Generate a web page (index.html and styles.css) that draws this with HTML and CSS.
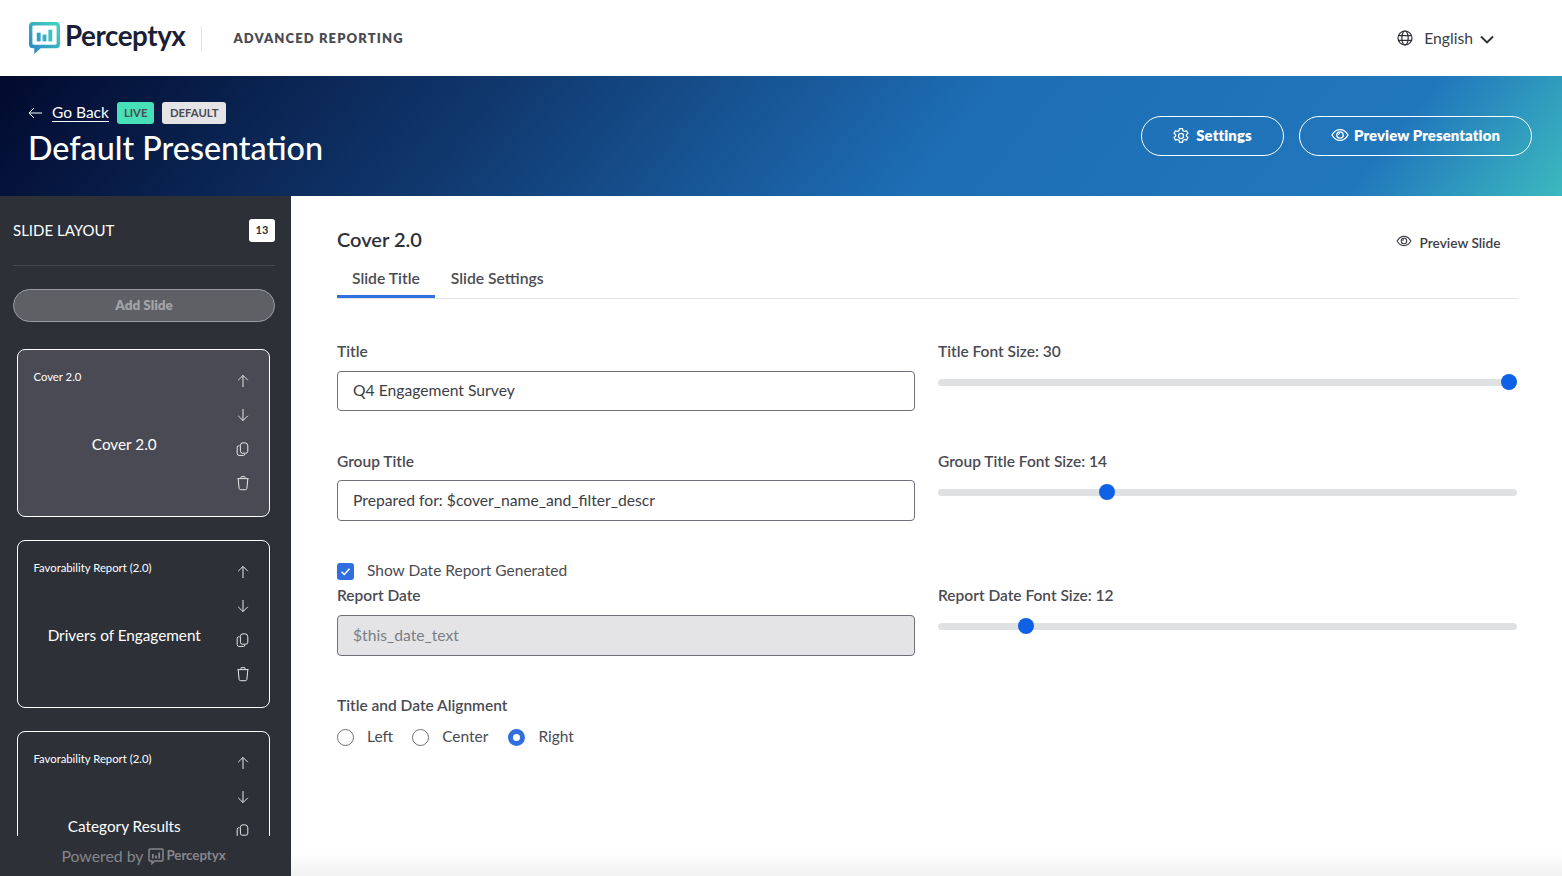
FILE: index.html
```html
<!DOCTYPE html>
<html lang="en">
<head>
<meta charset="utf-8">
<title>Default Presentation</title>
<link rel="stylesheet" href="styles.css">
</head>
<body>
<svg class="defs" width="0" height="0" aria-hidden="true">
  <defs>
    <linearGradient id="logoGrad" x1="0" y1="1" x2="1" y2="0">
      <stop offset="0" stop-color="#2a7fc8"/><stop offset="1" stop-color="#45d8bc"/>
    </linearGradient>
    <symbol id="i-up" viewBox="0 0 16 16"><path d="M8 14V2.5M3.2 7.2 8 2.4l4.8 4.8" fill="none" stroke="currentColor" stroke-width="1"/></symbol>
    <symbol id="i-down" viewBox="0 0 16 16"><path d="M8 2v11.5M3.2 8.8 8 13.6l4.8-4.8" fill="none" stroke="currentColor" stroke-width="1"/></symbol>
    <symbol id="i-copy" viewBox="0 0 16 16"><path d="M4.600 4.800H3.600a1.400 1.400 0 0 0-1.400 1.400v6.400a1.800 1.800 0 0 0 1.800 1.800h4.400a1.600 1.600 0 0 0 1.600-1.400M8 1.800h1.800a3 3 0 0 1 3 3v5.400a2 2 0 0 1-2 2H7.400a2 2 0 0 1-2-2V4.400A2.600 2.600 0 0 1 8 1.800Z" fill="none" stroke="currentColor" stroke-width="1"/></symbol>
    <symbol id="i-trash" viewBox="0 0 16 16"><path d="M2.400 3.600h11.200M5.800 3.400V2.800A1.200 1.200 0 0 1 7 1.600h2a1.200 1.200 0 0 1 1.200 1.200v.6M3.200 3.800l.9 9.600a1.600 1.600 0 0 0 1.600 1.300h4.600a1.600 1.600 0 0 0 1.600-1.300l.9-9.600" fill="none" stroke="currentColor" stroke-width="1"/></symbol>
    <symbol id="i-eye" viewBox="0 0 18 14"><path d="M1 7c2-3.600 4.800-5.400 8-5.400S15 3.400 17 7c-2 3.600-4.800 5.400-8 5.400S3 10.600 1 7Z" fill="none" stroke="currentColor" stroke-width="1.300"/><circle cx="9" cy="7" r="3.200" fill="none" stroke="currentColor" stroke-width="1.300"/><path d="M9 5.400A1.600 1.600 0 0 0 7.400 7" fill="none" stroke="currentColor" stroke-width="1"/></symbol>
  </defs>
</svg>

<header class="topbar">
  <div class="brand">
    <svg class="logo" viewBox="0 0 32 33" aria-hidden="true">
      <path d="M4 0h24a4 4 0 0 1 4 4v19a4 4 0 0 1-4 4H12l-6.500 6v-6H4a4 4 0 0 1-4-4V4a4 4 0 0 1 4-4Z" fill="url(#logoGrad)"/>
      <rect x="3.500" y="3.500" width="25" height="20" rx="1.500" fill="#fff"/>
      <rect x="8" y="11" width="4" height="9" fill="#2f9fcb"/>
      <rect x="14" y="13" width="4" height="7" fill="#35b0c9"/>
      <rect x="20" y="8" width="4" height="12" fill="#3cc2c4"/>
    </svg>
    <span class="wordmark">Perceptyx</span>
  </div>
  <span class="brand-sep"></span>
  <span class="product">ADVANCED REPORTING</span>
  <div class="lang">
    <svg class="globe" viewBox="0 0 16 16" aria-hidden="true"><g fill="none" stroke="#2e3038" stroke-width="1.200"><circle cx="8" cy="8" r="7"/><ellipse cx="8" cy="8" rx="3.200" ry="7"/><path d="M1.400 5.600h13.200M1.400 10.400h13.200"/></g></svg>
    <span class="lang-text">English</span>
    <svg class="chev" viewBox="0 0 14 9" aria-hidden="true"><path d="M1 1.500 7 7.500l6-6" fill="none" stroke="#2e3038" stroke-width="1.900"/></svg>
  </div>
</header>

<section class="banner">
  <div class="banner-left">
    <div class="crumbs">
      <svg class="back" viewBox="0 0 14 12" aria-hidden="true"><path d="M14 6H1M6 1 1 6l5 5" fill="none" stroke="#fff" stroke-width="1"/></svg>
      <a class="goback" href="#">Go Back</a>
      <span class="tag tag-live">LIVE</span>
      <span class="tag tag-default">DEFAULT</span>
    </div>
    <h1 class="pagetitle">Default Presentation</h1>
  </div>
  <div class="banner-actions">
    <button class="btn btn-settings">
      <svg class="btn-ico" viewBox="1 1 14 14" aria-hidden="true"><g fill="none" stroke="#fff" stroke-width="1.100"><path d="M6.700 1.500h2.600l.4 1.800 1.300.7 1.800-.6 1.300 2.300-1.400 1.200v1.200l1.400 1.200-1.300 2.300-1.800-.6-1.300.7-.4 1.800H6.700l-.4-1.800-1.300-.7-1.800.6-1.300-2.300 1.400-1.200V6.900L1.900 5.700l1.300-2.300 1.800.6 1.300-.7Z" stroke-linejoin="round"/><circle cx="8" cy="8" r="2.200"/></g></svg>
      Settings
    </button>
    <button class="btn btn-preview">
      <svg class="btn-eye"><use href="#i-eye"/></svg>
      Preview Presentation
    </button>
  </div>
</section>

<div class="workspace">
  <aside class="sidebar">
    <div class="side-head">
      <span class="side-title">SLIDE LAYOUT</span>
      <span class="count">13</span>
    </div>
    <button class="add-slide">Add Slide</button>
    <div class="slides">
      <article class="slide slide-active">
        <div class="slide-body">
          <div class="slide-type">Cover 2.0</div>
          <div class="slide-name">Cover 2.0</div>
        </div>
        <div class="slide-tools">
          <svg><use href="#i-up"/></svg><svg><use href="#i-down"/></svg><svg><use href="#i-copy"/></svg><svg><use href="#i-trash"/></svg>
        </div>
      </article>
      <article class="slide">
        <div class="slide-body">
          <div class="slide-type">Favorability Report (2.0)</div>
          <div class="slide-name">Drivers of Engagement</div>
        </div>
        <div class="slide-tools">
          <svg><use href="#i-up"/></svg><svg><use href="#i-down"/></svg><svg><use href="#i-copy"/></svg><svg><use href="#i-trash"/></svg>
        </div>
      </article>
      <article class="slide">
        <div class="slide-body">
          <div class="slide-type">Favorability Report (2.0)</div>
          <div class="slide-name">Category Results</div>
        </div>
        <div class="slide-tools">
          <svg><use href="#i-up"/></svg><svg><use href="#i-down"/></svg><svg><use href="#i-copy"/></svg><svg><use href="#i-trash"/></svg>
        </div>
      </article>
    </div>
    <footer class="powered">
      <span>Powered by</span>
      <svg class="mini-logo" viewBox="0 0 16 17" aria-hidden="true"><path d="M2 1h12a1 1 0 0 1 1 1v10a1 1 0 0 1-1 1H6.500L4 15.500V13H2a1 1 0 0 1-1-1V2a1 1 0 0 1 1-1Z" fill="none" stroke="#85868b" stroke-width="1.500"/><path d="M4.800 6v4.500M8 7.500v3M11.200 4.500v6" stroke="#85868b" stroke-width="1.800"/></svg>
      <span class="mini-word">Perceptyx</span>
    </footer>
  </aside>

  <main class="editor">
    <div class="editor-head">
      <h2 class="slide-heading">Cover 2.0</h2>
      <a class="preview-slide" href="#"><svg class="ps-eye"><use href="#i-eye"/></svg>Preview Slide</a>
    </div>
    <nav class="tabs">
      <span class="tab tab-on">Slide Title</span>
      <span class="tab">Slide Settings</span>
    </nav>
    <form class="form">
      <div class="field">
        <label class="label">Title</label>
        <input class="input" value="Q4 Engagement Survey">
      </div>
      <div class="field">
        <label class="label">Title Font Size: 30</label>
        <div class="slider"><span class="thumb thumb-30"></span></div>
      </div>
      <div class="field field-second">
        <label class="label label-tight">Group Title</label>
        <input class="input input-tall" value="Prepared for: $cover_name_and_filter_descr">
      </div>
      <div class="field field-second">
        <label class="label">Group Title Font Size: 14</label>
        <div class="slider"><span class="thumb thumb-14"></span></div>
      </div>
      <div class="field">
        <div class="check-row">
          <span class="checkbox"><svg viewBox="0 0 17 17" aria-hidden="true"><path d="M4.500 8.800 7.300 11.500 12.500 5.800" fill="none" stroke="#fff" stroke-width="1.500"/></svg></span>
          <span class="opt">Show Date Report Generated</span>
        </div>
        <label class="label">Report Date</label>
        <input class="input input-tall input-off" value="$this_date_text" disabled>
      </div>
      <div class="field field-end">
        <label class="label">Report Date Font Size: 12</label>
        <div class="slider"><span class="thumb thumb-12"></span></div>
      </div>
      <div class="field">
        <label class="label">Title and Date Alignment</label>
        <div class="radios">
          <span class="radio"></span><span class="opt radio-text">Left</span>
          <span class="radio"></span><span class="opt radio-text radio-text-wide">Center</span>
          <span class="radio radio-on"></span><span class="opt">Right</span>
        </div>
      </div>
    </form>
    <div class="fade"></div>
  </main>
</div>
</body>
</html>
```
FILE: styles.css
```css
* { box-sizing: border-box; }
html, body { margin: 0; height: 100%; }
body {
  width: 1562px;
  height: 876px;
  overflow: hidden;
  background: #fff;
  color: #2e3038;
  font-family: "Lato", "Liberation Sans", sans-serif;
  display: flex;
  flex-direction: column;
}
.defs { position: absolute; }

.topbar {
  height: 76px;
  flex: none;
  display: flex;
  align-items: center;
  padding: 0 68px 0 29px;
}
.brand { display: flex; align-items: center; gap: 5px; }
.logo { width: 31px; height: 32px; display: block; margin-top: -1px; }
.wordmark { font-size: 27.800px; font-weight: 700; color: #1b1f36; letter-spacing: -0.45px; line-height: 32px; margin-top: -5px; }
.brand-sep { width: 1px; height: 25px; background: #e2e2e4; margin: 0 31px 0 16px; }
.product { font-size: 13px; font-weight: 800; letter-spacing: 1.12px; color: #4a4b52; }
.lang { margin-left: auto; display: flex; align-items: center; font-size: 15.700px; color: #3c3d45; }
.lang-text { padding-bottom: 1px; }
.globe { width: 16px; height: 16px; margin-right: 11px; }
.chev { width: 14px; height: 9px; margin-left: 7px; margin-top: 2px; }

.banner {
  height: 120px;
  flex: none;
  display: flex;
  align-items: center;
  justify-content: space-between;
  padding: 0 30px 0 29px;
  color: #fff;
  background: linear-gradient(129deg, #020a2e 0%, #10386e 31%, #1d6db4 60%, #2177bc 87%, #3cb9bf 100%);
}
.banner-left { margin-top: -3px; }
.crumbs { display: flex; align-items: center; height: 22px; }
.back { width: 14px; height: 12px; margin-right: 10px; margin-left: -1px; }
.goback { color: #fff; font-size: 15.500px; text-decoration: none; border-bottom: 1px solid #fff; line-height: 18px; margin-right: 8px; }
.tag { height: 22px; border-radius: 3px; font-size: 11.300px; font-weight: 700; line-height: 22px; padding: 0 7.500px; color: #4a4b52; }
.tag-live { background: #47e0b8; padding: 0 7px; margin-right: 8px; }
.tag-default { background: #e4e4e7; }
.pagetitle { margin: 4px 0 0 -1px; font-size: 32.300px; font-weight: 500; line-height: 40px; }
.banner-actions { display: flex; gap: 15px; }
.btn {
  height: 40px;
  border: 1px solid #fff;
  border-radius: 20px;
  background: transparent;
  color: #fff;
  font: 800 14.900px "Lato", "Liberation Sans", sans-serif;
  letter-spacing: 0.1px;
  display: flex;
  align-items: center;
  justify-content: center;
  padding-bottom: 3px;
}
.btn-settings { width: 143px; gap: 7px; }
.btn-preview { width: 233px; gap: 5px; }
.btn-ico { width: 16px; height: 16px; margin-top: 1px; }
.btn-eye { width: 18px; height: 14px; }

.workspace { flex: 1; display: flex; min-height: 0; }
.sidebar {
  width: 291px;
  flex: none;
  background: #2e3038;
  padding: 22px 16px 0 13px;
  display: flex;
  flex-direction: column;
  color: #fff;
}
.side-head {
  display: flex;
  align-items: center;
  justify-content: space-between;
  height: 48px;
  padding-bottom: 22px;
  border-bottom: 1px solid #46474f;
  flex: none;
}
.side-title { font-size: 15px; line-height: 20px; padding-bottom: 2px; }
.count {
  width: 26px;
  height: 23px;
  background: #fff;
  border-radius: 3px;
  color: #2e3038;
  font-size: 11px;
  font-weight: 700;
  text-align: center;
  line-height: 21px;
}
.add-slide {
  flex: none;
  height: 33px;
  margin-top: 23px;
  border-radius: 17px;
  border: 1px solid #9b9ca1;
  background: #5f6065;
  color: #a2a3a7;
  font: 800 13.500px "Lato", "Liberation Sans", sans-serif;
  padding-bottom: 2px;
}
.slides {
  flex: none;
  height: 487px;
  margin-top: 27px;
  padding: 0 5px 0 4px;
  overflow: hidden;
  display: flex;
  flex-direction: column;
  gap: 23px;
}
.slide {
  flex: none;
  height: 168px;
  border: 1px solid #fff;
  border-radius: 8px;
  display: flex;
  padding: 20px 18px 0 15.500px;
}
.slide-active { background: #494a53; }
.slide-body { flex: 1; }
.slide-type { font-size: 11.300px; line-height: 14px; }
.slide-name { font-size: 15.300px; line-height: 20px; text-align: center; margin-top: 50px; margin-right: 20px; }
.slide-tools { width: 16px; display: flex; flex-direction: column; gap: 18px; margin-top: 3px; color: #e6e6e8; }
.slide-tools svg { width: 16px; height: 16px; display: block; flex: none; }

.powered {
  flex: 1;
  display: flex;
  align-items: center;
  justify-content: center;
  gap: 5px;
  color: #85868b;
  font-size: 15.800px;
  padding: 0 1px 2px 0;
}
.mini-logo { width: 16px; height: 17px; margin-top: 2px; }
.mini-word { font-size: 13.400px; font-weight: 700; margin-left: -3px; letter-spacing: -0.1px; }

.editor { flex: 1; position: relative; padding: 0 44px 0 46px; }
.editor-head { display: flex; justify-content: space-between; align-items: flex-start; height: 60px; padding-top: 31px; }
.slide-heading { margin: 0; font-size: 20px; font-weight: 600; line-height: 24px; }
.preview-slide { display: flex; align-items: center; gap: 8px; margin: 7px 17.500px 0 0; font-size: 13.700px; font-weight: 600; color: #3c3d45; text-decoration: none; }
.ps-eye { width: 16px; height: 12px; margin-top: -4px; }
.tabs { display: flex; height: 43px; border-bottom: 1px solid #e2e2e4; padding-top: 5px; }
.tab { font-size: 15.700px; font-weight: 600; color: #4a4b52; padding: 7px 15px 0; line-height: 20px; height: 37px; }
.tab + .tab { padding-left: 16px; }
.tab-on { border-bottom: 3px solid #2f6fde; }

.form { display: grid; grid-template-columns: 578px 579px; column-gap: 23px; row-gap: 40px; padding-top: 43px; }
.field { display: flex; flex-direction: column; }
.field-second { padding-top: 1px; }
.field-end { justify-content: flex-end; }
.label { font-size: 15.500px; font-weight: 600; line-height: 18px; color: #4a4b52; margin-bottom: 11px; }
.label-tight { margin-bottom: 10px; }
.input {
  height: 40px;
  border: 1px solid #6f7078;
  border-radius: 4px;
  padding: 0 15px 2px;
  font: 400 15.700px "Lato", "Liberation Sans", sans-serif;
  color: #3c3d45;
  background: #fff;
}
.input-tall { height: 41px; }
.input-off { background: #e4e4e7; color: #7c7d85; }
.check-row { display: flex; align-items: center; height: 20px; margin-bottom: 5px; }
.checkbox { width: 17px; height: 17px; border-radius: 3px; background: #2f6fde; margin-right: 13px; }
.checkbox svg { display: block; width: 17px; height: 17px; }
.opt { font-size: 15.500px; color: #4a4b52; line-height: 18px; padding-bottom: 2px; }
.slider { height: 7px; margin-top: 8px; border-radius: 4px; background: #dfe1e3; position: relative; }
.field-end .slider { margin-bottom: 26px; }
.thumb { position: absolute; top: -5px; width: 16px; height: 16px; border-radius: 50%; background: #0f62e6; }
.thumb-30 { right: 0; }
.thumb-14 { left: 161px; }
.thumb-12 { left: 80px; }
.radios { display: flex; align-items: center; height: 24px; }
.radio { width: 17px; height: 17px; border-radius: 50%; border: 1px solid #6f7078; margin-right: 13px; }
.radio-text { margin-right: 19px; }
.radio-text-wide { margin-right: 20px; }
.radio-on { border: 5px solid #2f6fde; background: #fff; }
.fade { position: absolute; left: 0; right: 0; bottom: 0; height: 24px; background: linear-gradient(#fff, #f1f1f2); }
```
